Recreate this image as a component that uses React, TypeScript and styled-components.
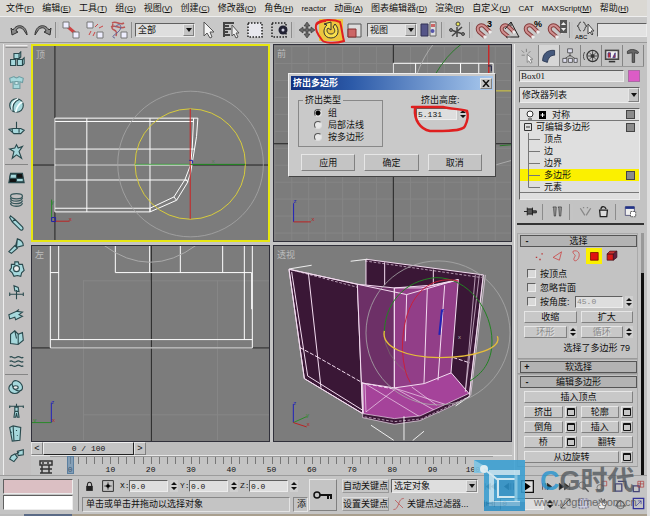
import React from "react";
import styled, { createGlobalStyle, css } from "styled-components";

const sans = `"Liberation Sans", "Noto Sans CJK SC", sans-serif`;
const mono = `"Liberation Mono", "Noto Sans CJK SC", monospace`;
const face = "#c4c4c4";
const raised = css`border: 1px solid; border-color: #e6e6e6 #808080 #808080 #e6e6e6;`;
const sunken = css`border: 1px solid; border-color: #606060 #ececec #ececec #606060;`;

const Global = createGlobalStyle`
  * { box-sizing: border-box; }
  body { margin: 0; background: ${face}; color: #111; font: 9px/12px ${sans}; }
  button, input, select { margin: 0; padding: 0; font: inherit; color: inherit; border-radius: 0; }
  svg { display: block; }
`;

const Page = styled.div`
  position: relative; display: flex; flex-direction: column; min-height: 100vh;
  overflow: hidden; background: ${face}; border-right: 3px solid #dedede;
`;
const MenuBar = styled.nav`
  display: flex; align-items: center; gap: 8px; height: 16px; padding-left: 6px; background: #dad8d3;
`;
const MenuItem = styled.button`
  border: 0; background: none; white-space: nowrap; line-height: 14px;
`;
const Latin = styled.span`font-size: 8px;`;

const Toolbar = styled.div`
  display: flex; align-items: center; height: 27px; padding-left: 7px;
  border-top: 1px solid #eee; border-bottom: 1px solid #9a9a9a; background: #c8c8c8;
`;
const ToolButton = styled.button<{ $active?: boolean }>`
  position: relative; display: flex; flex: 0 0 24px; justify-content: center; align-items: center; height: 22px;
  border: 0; background: ${(p) => (p.$active ? "#edc63e" : "none")};
`;
const Divider = styled.i`flex: 0 0 4px; height: 16px; border-left: 1px solid #8c8c8c; border-right: 2px solid ${face};`;
const SelectWrap = styled.label<{ $w?: number; $h?: number }>`
  position: relative; display: block; flex: ${(p) => (p.$w ? `0 0 ${p.$w}px` : "0 0 auto")};
  height: ${(p) => p.$h || 14}px; background: #dedede; ${sunken}
`;
const NativeSelect = styled.select`
  display: block; appearance: none; width: 100%; height: 100%; padding-left: 2px; border: 0; background: none;
`;
const Caret = styled.span`
  position: absolute; top: 0; right: 0; bottom: 0; width: 11px; display: flex; align-items: center;
  justify-content: center; background: ${face}; pointer-events: none; ${raised}
`;
const SetInput = styled.input`flex: 1; min-width: 20px; height: 14px; background: #e2e2e2; ${sunken}`;
const Mark = styled.svg<{ $x: number; $y: number }>`
  position: absolute; left: ${(p) => p.$x}px; top: ${(p) => p.$y}px; z-index: 3; overflow: visible; pointer-events: none;
`;

const Body = styled.main`display: flex; flex: 1; padding-top: 1px;`;
const SideBar = styled.aside`
  flex: 0 0 28px; margin-left: 3px; display: flex; flex-direction: column; padding: 4px 3px 0 1px;
  border-left: 1px solid #eee; background: #c2c0c0;
`;
const SideTop = styled.i`height: 3px; margin-top: -3px; border: 1px solid; border-color: #eee transparent #909090;`;
const SideButton = styled.button`height: 23px; display: flex; align-items: center; justify-content: center; border: 0; background: none;`;
const SideLine = styled.i`height: 1px; margin: 1px 0; background: #858585;`;

const Center = styled.section`flex: 1; min-width: 0; display: flex; flex-direction: column; position: relative;`;
const Views = styled.div`
  flex: 1; display: grid; grid-template: 1fr 1fr / 1fr 1fr; gap: 3px; min-height: 398px;
`;
const View = styled.div<{ $active?: boolean }>`
  position: relative; min-width: 0; min-height: 0; overflow: hidden; background: #7c7c7c;
  border: ${(p) => (p.$active ? "2px solid #e6e610" : "1px solid #30303a")};
`;
const Scene = styled.svg`position: absolute; inset: 0; width: 100%; height: 100%;`;
const ViewName = styled.span`position: relative; display: block; padding: 3px; color: #bcbcbc;`;

const TimeRow = styled.div`display: flex; height: 13px; background: #bdbdbd;`;
const TimeStep = styled.button`width: 12px; background: ${face}; line-height: 9px; ${raised}`;
const TimeThumb = styled.button`
  width: 91px; background: ${face}; font-family: ${mono}; font-size: 8px; line-height: 10px;
  border: 1px solid; border-color: #eee #222 #222 #eee;
`;
const TrackBar = styled.div`display: flex; height: 20px; border-top: 1px solid #e8e8e8;`;
const TrackIcon = styled.button`width: 19px; border: 0; padding: 2px 0 0 8px; background: none;`;
const Ruler = styled.div`position: relative; flex: 1; margin-right: 19px;`;
const Ticks = styled.div`
  height: 9px; display: grid; grid-template-columns: repeat(50, 1fr); padding: 0 20px; border-top: 1px solid #999;
  i { height: 7px; border-left: 1px solid #777; }
`;
const TickLabels = styled.div`
  display: grid; grid-template-columns: repeat(11, 1fr); font: 8px/10px ${mono}; text-align: center;
`;
const TimeMark = styled.i`position: absolute; left: 17px; top: 0; width: 7px; height: 18px; background: #5b87ad99; border: 1px solid #5b7f9f;`;

const Dialog = styled.form`
  position: absolute; left: 257px; top: 29px; z-index: 2; width: 208px; padding: 2px; background: #c9c9c9; border: 1px solid;
  border-color: #eee #444 #444 #eee;
`;
const TitleBar = styled.header`
  display: flex; align-items: center; justify-content: space-between; height: 14px; padding: 0 1px 0 2px; color: #fff;
  font-weight: bold; background: linear-gradient(90deg, #12307e, #2c5aa8 30%, #a9c9ee);
`;
const Close = styled.button`width: 12px; height: 11px; padding: 1px; background: ${face}; ${raised}`;
const DialogBody = styled.div`display: grid; grid-template-columns: 85px 1fr; gap: 33px; padding: 4px 26px 0 7px;`;
const Group = styled.fieldset`
  height: 53px; margin: 0; padding: 1px 0 0 15px; border: 1px solid #888; min-width: 0;
  legend { margin-left: -11px; padding: 0 2px; line-height: 12px; }
`;
const RadioRow = styled.label`
  display: flex; align-items: center; gap: 6px; height: 12px; white-space: nowrap;
  input { appearance: none; width: 8px; height: 8px; border-radius: 50%; background: #e8e8e8; border: 1px solid; border-color: #555 #ddd #ddd #555; }
  input:checked { background: radial-gradient(circle, #000 0 2px, #e8e8e8 3px); }
`;
const HeightField = styled.div`
  position: relative; padding-top: 0;
  label { display: block; padding-left: 5px; margin-bottom: 2px; }
`;
const DialogActions = styled.div`display: flex; gap: 9px; padding: 7px 11px 3px 10px;`;
const DialogButton = styled.button`flex: 1; height: 17px; background: ${face}; ${raised}`;

const NumRow = styled.div`display: flex; align-items: center; gap: 2px;`;
const NumInput = styled.input<{ $w: number }>`
  width: ${(p) => p.$w}px; height: 12px; padding: 0 1px; background: #dedede; font: 8px/10px ${mono}; ${sunken}
  &:disabled { color: #888; }
`;
const SpinBox = styled.button`width: 8px; height: 12px; display: flex; align-items: center; justify-content: center; border: 0; background: #cfcfcf;`;

const Panel = styled.aside`
  flex: 0 0 133px; min-width: 0; margin-left: 2px; padding: 1px 3px 0 2px; display: flex; flex-direction: column; border-left: 1px solid #eee;
  background: #c3c3c3;
`;
const Tabs = styled.div`display: flex; justify-content: center; height: 22px; border-bottom: 1px solid #999;`;
const Tab = styled.button<{ $active?: boolean }>`
  width: 21px; display: flex; align-items: center; justify-content: center; border: 0;
  border-right: 1px solid #858585; background: ${(p) => (p.$active ? "#d6d6d6" : "none")};
`;
const ObjectForm = styled.div`display: flex; flex-direction: column; gap: 5px; padding: 3px 4px 0 2px;`;
const NameRow = styled.div`
  display: flex; gap: 4px;
  input { flex: 1; width: 0; min-width: 0; height: 12px; background: #dedede; padding: 0 1px; font: 9px/10px "Liberation Serif", serif; ${sunken} }
`;
const Swatch = styled.button`width: 12px; height: 12px; border: 1px solid #aa6aa4; background: #dc5cc6;`;
const Stack = styled.ul`list-style: none; height: 92px; margin: 0; padding: 0; background: #dfdfdf; ${sunken}`;
const StackRow = styled.li<{ $level?: number; $on?: boolean; $line?: boolean }>`
  display: flex; align-items: center; gap: 4px; height: 12px; padding: 0 4px 0 ${(p) => (p.$level ? 8 : 4)}px;
  background: ${(p) => (p.$on ? "#fbf000" : "none")}; border-bottom: ${(p) => (p.$line ? "1px solid #777" : "0")};
  span { flex: 1; }
`;
const Square = styled.i`width: 9px; height: 9px; background: #8b8b8b; border: 1px solid #444;`;
const StackTools = styled.div`
  display: flex; align-items: center; justify-content: space-between; height: 25px; padding: 0 7px; border-bottom: 2px solid #333;
  button { border: 0; background: none; }
`;
const Rolls = styled.div`
  flex: 1; display: grid; grid-template-columns: minmax(0, 1fr) 3px; column-gap: 3px; padding-top: 8px;
`;
const ScrollLine = styled.i`background: linear-gradient(#999 0 40px, #111 40px);`;
const RollList = styled.div`display: flex; flex-direction: column;`;
const Roll = styled.section`padding: 1px 0 0 2px; border: 1px solid #aaa; border-bottom-color: #9a9a9a;`;
const RollHead = styled.button`
  display: grid; grid-template-columns: 12px 1fr 12px; width: 100%; height: 12px; line-height: 10px;
  background: #b3b3b3; border: 1px solid #555;
`;
const RollBody = styled.div`display: flex; flex-direction: column; gap: 3px; padding: 3px 4px;`;
const SubObjects = styled.div`display: flex; gap: 2px; padding-left: 8px; margin-top: -2px;`;
const SubButton = styled.button<{ $on?: boolean }>`
  width: 16px; height: 16px; display: flex; align-items: center; justify-content: center; border: 0;
  background: ${(p) => (p.$on ? "#fbf000" : "none")};
`;
const Checks = styled.div`display: flex; flex-direction: column; gap: 1px; padding-left: 3px;`;
const CheckRow = styled.label`
  display: flex; align-items: center; gap: 4px; height: 13px; white-space: nowrap;
  input { appearance: none; width: 9px; height: 9px; background: #d8d8d8; ${sunken} }
`;
const AngleRow = styled.div`display: flex; justify-content: space-between; align-items: center;`;
const TwoCol = styled.div`display: grid; grid-template-columns: 1fr 1fr; gap: 4px;`;
const Cell = styled.div`display: flex; gap: 2px;`;
const PushButton = styled.button`
  flex: 1; min-width: 0; height: 12px; line-height: 10px; background: #c8c8c8; ${raised}
  &:disabled { color: #8a8a8a; text-shadow: 1px 1px #e4e4e4; }
`;
const OptionButton = styled.button`width: 12px; height: 12px; padding: 1px; background: #c8c8c8; ${raised}`;
const Info = styled.p`margin: 1px 0; text-align: right; padding-right: 3px;`;

const Status = styled.footer`display: flex; gap: 5px; height: 39px; padding: 3px 0 3px 3px; border-top: 1px solid #9c9c9c; white-space: nowrap;`;
const Listener = styled.div`flex: 0 0 70px; display: grid; grid-template-rows: 15px 15px; gap: 1px;`;
const ListenerLine = styled.input<{ $pink?: boolean }>`width: 100%; background: ${(p) => (p.$pink ? "#dbbfc3" : "#fff")}; ${sunken}`;
const Coords = styled.div`flex: 0 0 230px; display: grid; grid-template-rows: 14px 15px; gap: 4px; padding-left: 3px; border-left: 1px solid #888;`;
const CoordRow = styled.div`display: flex; align-items: center; gap: 2px; label { width: 7px; font: 8px/10px ${mono}; text-align: right; }`;
const LockBox = styled.button`width: 14px; height: 14px; margin-right: 3px; display: flex; align-items: center; justify-content: center; border: 0; background: none;`;
const Prompt = styled.div`display: flex; gap: 3px;`;
const PromptText = styled.output<{ $fill?: boolean }>`flex: ${(p) => (p.$fill ? "1" : "0 0 15px")}; padding-left: 3px; border: 1px solid; border-color: #888 #e4e4e4 #e4e4e4 #888;`;
const KeyButton = styled.button`flex: 0 0 28px; margin-left: -4px; height: 32px; display: flex; align-items: center; justify-content: center; background: ${face}; ${raised}`;
const KeyGrid = styled.div`display: grid; grid-template: 14px 14px / 47px 87px; gap: 4px 2px;`;
const FlatButton = styled.button`border: 1px solid; border-color: #ddd #999 #999 #ddd; background: ${face}; text-align: center;`;
const FilterRow = styled.div`display: flex; align-items: center; button { border: 0; background: none; }`;
const PlayGrid = styled.div`flex: 1; display: flex; flex-direction: column; gap: 3px; padding-left: 1px;`;
const PlayRow = styled.div`display: flex; align-items: center; justify-content: space-between; height: 15px; padding-right: 2px;
  button { border: 0; background: none; }
`;
const BottomEdge = styled.div`height: 2px; background: linear-gradient(90deg, #bbb 24px, #5a6a86 24px 72px, #a99f8e 72px);`;

const Brand = styled.div`
  position: absolute; right: 0; bottom: 5px; z-index: 4; display: flex; align-items: center; gap: 11px; pointer-events: none;
`;
const BrandText = styled.div`width: 111px; margin-top: 5px; color: #555b60; opacity: 0.8; white-space: nowrap;`;
const BrandName = styled.div`padding-left: 4px; font: bold 27px/29px ${sans}; b { color: #2694cf; }`;
const BrandUrl = styled.div`margin-left: -2px; font: 11px/13px ${sans}; color: #555;`;

/* ---------- drawings ---------- */
const art: Record<string, React.ReactNode> = {
  undo: <path d="M2 8l1 7 6-3-2-1c1-4 6-5 9 1l2 3c0-9-9-13-14-5z" fill="#888" stroke="#333" />,
  redo: <path d="M18 8l-1 7-6-3 2-1c-1-4-6-5-9 1l-2 3c0-9 9-13 14-5z" fill="#888" stroke="#333" />,
  link: <g fill="#eef" stroke="#777"><path d="M7 7l7 6" stroke="#c44" strokeWidth="3" /><path d="M2 2h6v6H2zM12 12h6v6h-6z" /></g>,
  unlink: <g fill="#eef" stroke="#777"><path d="M2 2h6v6H2zM12 12h6v6h-6z" /><path d="M10 7l3-3M14 8l4-2M6 11l-2 4M10 12l-2 4" stroke="#c44" /></g>,
  bind: <g fill="none" stroke="#b55"><path d="M3 3c5-3 7 3 12 0M2 7c6-3 8 3 14 0M4 4c-4 9 6 3 3 12" strokeWidth="1.5" /><path d="M6 7c6-6 8 1 3 5s-7 5-3 6" stroke="#669" /><path d="M12 12h6v6h-6z" fill="#eef" stroke="#777" /></g>,
  pick: <path d="M7 2v14l3-3 3 5 2-1-2-5h4z" fill="#f4f4f4" stroke="#555" />,
  byName: <g><path d="M2 3h11M2 6h6M2 9h8M2 12h5M2 15h7M3 2v15" stroke="#444" strokeWidth="2" /><path d="M11 5v11l2-2 2 4 2-1-2-4h3z" fill="#eee" stroke="#555" /></g>,
  region: <path d="M3 3h14v14H3z" fill="#e8e8ee" stroke="#222" strokeWidth="1.5" strokeDasharray="1.5 1.5" />,
  window: <g><path d="M3 3h14v14H3z" fill="none" stroke="#222" strokeWidth="1.5" strokeDasharray="1.5 1.5" /><circle cx="14" cy="10" r="4.5" fill="#223" /><circle cx="14" cy="10" r="1.5" fill="#ccd" /></g>,
  move: <path d="M10 2l3 4h-2v3h3V7l4 3-4 3v-2h-3v3h2l-3 4-3-4h2v-3H6v2l-4-3 4-3v2h3V6H7z" fill="#666" stroke="#333" strokeWidth=".6" />,
  rotate: <path d="M6 5c-5 4-4 13 4 13 8 0 9-9 4-14l-2 3c3 3 2 7-2 7s-5-4-3-6l3 2V2L3 4z" fill="#f8e04d" stroke="#333" />,
  scale: <g><path d="M3 4h13v13H3z" fill="#ddd" stroke="#555" /><path d="M3 9h8v8H3z" fill="#c66" stroke="#833" /></g>,
  pivot: <g><path d="M2 4h7v12H2z" fill="#558" stroke="#335" /><path d="M11 2h6v14h-6z" fill="#ddd" stroke="#666" /><path d="M12 4h4v3h-4z" fill="#c66" /><circle cx="13.500" cy="11" r="2" fill="#55a" /></g>,
  manip: <g stroke="#444" fill="none"><path d="M10 7v10M4 10l12 4M5 16l10-9" strokeWidth="1.500" /><circle cx="11" cy="4" r="2" fill="#e6e155" /><circle cx="4" cy="10" r="1.500" fill="#777" /><circle cx="16" cy="14" r="1.500" fill="#777" /></g>,
  magnet: <g fill="none"><path d="M10 17L4 12C0 7 6 3 10 7l5 5" stroke="#843c3c" strokeWidth="4" /><path d="M10 17L4 12C0 7 6 3 10 7l5 5" stroke="#d09090" strokeWidth="2" /><path d="M9 16l2 2M14 11l2 2" stroke="#eee" strokeWidth="3" /></g>,
  braces: <g fill="none" stroke="#444"><path d="M6 2c-3 0-1 4-4 4 3 0 1 5 4 5M8 2c3 0 1 4 4 4-3 0-1 5-4 5" /><path d="M13 4v10l2-2 2 3 1-1-2-3h3z" fill="#eee" /></g>,
};
const side = [
  <path d="M7 3h6v6H7zM3 10h6v7H3zM11 10h6v7h-6zM13 3l2-2v6l-2 2M17 10l2-2v7l-2 2" />,
  <g stroke="#6f9da2"><path d="M2 5l5-2c2 2 4 2 6 0l5 2-1 5-3-1v8H6V9l-3 1z" /><path d="M8 9h4v3H8z" fill="#eff" /></g>,
  <g><circle cx="10" cy="10" r="8" /><path d="M5 16C4 9 7 4 12 2M9 18c1-6 4-10 8-12" fill="none" strokeWidth="2" stroke="#f4ffff" /><path d="M6 17C5 10 8 5 13 3" fill="none" /></g>,
  <path d="M10 2v8M1 11l5-1h9l4 2-4 4H7zM5 11v4M13 10v5" />,
  <path d="M10 2l2 4 5-2-4 6 3 8-6-4-5 4 2-8-5-3 6-1z" />,
  <g><path d="M3 5h14l2 11H1z" fill="#111" /><path d="M3 6h7v5H2zM10 11h8v4h-8z" /></g>,
  <g fill="none" stroke="#39585c" strokeWidth="1.5"><ellipse cx="10" cy="5" rx="7" ry="3" /><path d="M3 7c0 5 13 5 14 0M3 10c0 5 13 5 14 0M3 13c0 5 13 5 14 0" /></g>,
  <path d="M3 1l5 4 9 9c2 3-1 5-3 3L5 8 2 3zM5 8l3-3" />,
  <path d="M1 16l7-7 3 3-7 6zM9 9l2-8c4 1 7 4 7 8l-8 2zM11 1l-1 10" />,
  <g><path d="M8 1h4l1 3 4 0 1 4 1 3-3 3-1 4-4-1-4 1-2-4-3-3 2-3 0-4 4 0z" /><circle cx="10" cy="9" r="3.500" fill="#eee" /></g>,
  <path d="M2 12h16M10 7v11M7 2l5 2 1 5-5-1zM2 10v4M18 10v4" />,
  <path d="M1 9l9-4 7 1-4 3 4 2-8 4-1-3-6 2zM10 5l3-2" />,
  <path d="M3 5l5-4 4 4 5-2 1 9-6 5-9-1zM8 1l2 9M12 5l0 12" />,
  <path d="M2 5c3-3 4 3 8 0s5 3 8 0M2 10c3-3 4 3 8 0s5 3 8 0M2 15c3-3 4 3 8 0s5 3 8 0" fill="none" />,
  <g><ellipse cx="8" cy="11" rx="7" ry="6" /><ellipse cx="11" cy="8" rx="7" ry="5" transform="rotate(45 11 8)" /><ellipse cx="9" cy="10" rx="3" ry="2" fill="#eee" /></g>,
  <path d="M2 5h16M10 2v4M8 6h4v5H8zM8 11l-1 7h2l1-5 1 5h2l-1-7M2 4v3M18 4v3" />,
  <path d="M2 3l4-2 9 2-1 15-9 1zM6 1l1 17M10 6v1M11 12v1M4 8v1" />,
  <g><path d="M11 4l7-2v6l-6 1zM4 9l4-2 3 4-4 5-5-3zM8 8l5-3" /></g>,
];
const Icon = ({ children, s = 20, b = 20 }: { children: React.ReactNode; s?: number; b?: number }) => (
  <svg width={s} height={s} viewBox={`0 0 ${b} ${b}`} aria-hidden="true">{children}</svg>
);
const Spin = ({ label, off }: { label: string; off?: boolean }) => (
  <SpinBox type="button" aria-label={label} disabled={off}>
    <svg width="6" height="10" viewBox="0 0 6 10"><path d="M0 4l3-3 3 3zM0 6l3 3 3-3z" fill="#111" /></svg>
  </SpinBox>
);
const Drop = ({ label, value, w, h }: { label: string; value: string; w?: number; h?: number }) => (
  <SelectWrap $w={w} $h={h}>
    <NativeSelect aria-label={label}><option>{value}</option></NativeSelect>
    <Caret><svg width="6" height="4" viewBox="0 0 6 4"><path d="M0 0h6L3 4z" fill="#111" /></svg></Caret>
  </SelectWrap>
);
const Tool = ({ id, label, on, extra }: { id: string; label: string; on?: boolean; extra?: React.ReactNode }) => (
  <ToolButton aria-label={label} $active={on}><Icon>{art[id]}</Icon>{extra}</ToolButton>
);
const Grid = ({ x, y, w, h, step }: { x: number; y: number; w: number; h: number; step: number }) => (
  <g stroke="#868686">
    {Array.from({ length: Math.ceil(w / step) }, (_, i) => <path key={`v${i}`} d={`M${x + i * step + 0.5} ${y}v${h}`} />)}
    {Array.from({ length: Math.ceil(h / step) }, (_, i) => <path key={`h${i}`} d={`M${x} ${y + i * step + 0.5}h${w}`} />)}
  </g>
);
const Glyph = ({ x, y, c, children }: { x: number; y: number; c: string; children: string }) => (
  <text x={x} y={y} fill={c} fontSize="18" fontFamily="Liberation Sans, sans-serif">{children}</text>
);

const TopScene = () => (
  <Scene viewBox="33 46 235 194">
    <g transform="translate(0 40) scale(.33333)" fill="none" stroke="#fff" strokeWidth="3">
      <path d="M164 0v620M90 376h730" stroke="#222" />
      <path d="M164 235h430M164 245h417M260 235v282M450 235v282M164 328h418M164 376h410M164 421h398M164 506h286M164 517h286M164 235v282" />
      <path d="M594 235l-4 55-8 50-10 60-10 30-32 52-80 35M581 235l-4 90-5 51-17 44-33 52-72 34M522 472l8 10M555 420l10 6M450 506v11" />
      <circle cx="572" cy="373" r="219" stroke="#a6a6a6" strokeWidth="2.500" />
      <circle cx="571" cy="373" r="166" stroke="#d8cc3c" />
      <path d="M405 374h332" stroke="#1d8a1d" /><path d="M405 376h165" stroke="#d8f0d8" strokeWidth="2" /><path d="M571 207v331" stroke="#c22" />
      <path d="M568 362h10v10" stroke="#22a" />
      <path d="M154 545v-65" stroke="#2a8a2a" /><path d="M160 545h48" stroke="#b22" /><path d="M154 534h12v12h-12z" stroke="#22a" />
      <g stroke="none"><Glyph x={206} y={544} c="#b22">x</Glyph><Glyph x={152} y={492} c="#2a8a2a">y</Glyph><Glyph x={636} y={370} c="#567a56">x</Glyph></g>
    </g>
  </Scene>
);
const FrontScene = () => (
  <Scene viewBox="274 45 237 196">
    <Grid x={274} y={46} w={240} h={200} step={17} />
    <g transform="translate(270 40) scale(.33333)" fill="none" stroke="#fff" strokeWidth="3">
      <path d="M370 0v620M0 312h740" stroke="#222" />
      <path d="M370 120V70h300v50M437 70v50M572 70v50M627 70v50" />
      <path d="M440 105Q460 50 492 10M680 375l60-17" stroke="#aaa" /><path d="M495 105Q530 45 575 12M690 318l50-4" stroke="#2a7a2a" />
      <path d="M657 10v110" stroke="#c22" strokeWidth="4" /><path d="M655 78h10v16" stroke="#224" /><path d="M670 153h60" stroke="#d8cc3c" />
      <path d="M70 547v-56" stroke="#22b" /><path d="M70 547h52" stroke="#b22" />
      <g stroke="none"><Glyph x={70} y={490} c="#22b">z</Glyph><Glyph x={124} y={544} c="#b22">x</Glyph></g>
    </g>
  </Scene>
);
const LeftScene = () => (
  <Scene viewBox="32 246 237 195">
    <Grid x={83} y={280} w={186} h={160} step={67} />
    <g transform="translate(0 240) scale(.33333)" fill="none" stroke="#fff" strokeWidth="3">
      <path d="M454 0v620M90 323h730" stroke="#222" />
      <path d="M151 0v323h606V0M176 0v298M733 0v298M151 298h606M151 97h25M346 0v97h409v110M449 0v97M541 0v97M668 0v97" />
      <path d="M310 14Q450 118 590 14" stroke="#aaa" />
      <path d="M154 547v-60" stroke="#22b" /><path d="M154 547H96" stroke="#2a8a2a" />
      <g stroke="none"><Glyph x={154} y={492} c="#22b">z</Glyph><Glyph x={100} y={544} c="#2a8a2a">y</Glyph><Glyph x={156} y={546} c="#b22">x</Glyph></g>
    </g>
  </Scene>
);
const PerspectiveScene = () => (
  <Scene viewBox="274 246 237 195">
    <g transform="translate(270 240) scale(.33333)" fill="none" stroke="#f3dcf0" strokeWidth="3" strokeLinejoin="round">
      <path d="M288 57l352 47-42 362-310-120z" fill="#3a1736" />
      <path d="M278 425l95 18 170-46 55 64-64 30-84 42-77 8-93-20z" fill="#a5439a" />
      <path d="M57 87l205 45 16 388-175-105z" fill="#3a1736" />
      <path d="M262 132l111 11v300l-98-15z" fill="#6d3067" stroke="none" />
      <path d="M373 143l112-8 80-17-22 280-80 32-90 13z" fill="#923e88" />
      <path d="M262 132l111 11h80l112-23M262 132l148 31 155-45M373 143v300l-98-15M410 163l-4 140M472 145l-10 285M524 135l-20 285" />
      <path d="M115 97l38 345M57 87l46 328 175 105-16-388zM65 95l48 312 165 103M344 66v68M490 88v44" />
      <path d="M90 322l52 28M142 350l136 78M275 428l95 18M550 352l50 16" strokeDasharray="12 5" />
      <path d="M285 430l3 85 90-70 150 48M373 443l135 75M425 440l75 55M285 430l165 100" strokeWidth="2" />
      <path d="M278 520l95 15 77-8 84-38 64-30v10l-64 34-84 38-77 11-95-20z" fill="#3a1736" strokeWidth="2" />
      <path d="M640 104l-42 358M628 104l-42 350M616 104l-30 350M646 104l-44 362" strokeWidth="2" />
      <path d="M285 62l350 50M57 87l205 54M284 530l90 14 80-8 146-68" strokeDasharray="8 5" strokeWidth="2" />
      <path d="M58 86l67-11M242 63l50-6M303 555l68 45M402 528v72M428 601l34-28M557 497l40-28" stroke="#eee" />
      <circle cx="504" cy="278" r="216" stroke="#aaa" strokeOpacity=".8" />
      <path d="M343 280c0-90 60-160 155-168 100 0 167 100 168 190 0 65-30 98-66 120" stroke="#228222" />
      <path d="M343 280q0 65 70 120" stroke="#7a8a6a" strokeOpacity=".5" />
      <path d="M565 122c-90-20-168 50-168 205q4 70 24 100" stroke="#c8203c" />
      <path d="M343 272c-10 50 70 80 165 80 110 0 190-30 174-64" stroke="#e6bd3a" strokeWidth="4" />
      <path d="M516 208l-8 76" stroke="#2222b4" strokeWidth="6" />
      <path d="M70 547v-56" stroke="#22b" /><path d="M70 547l40-18" stroke="#2a8a2a" /><path d="M70 547l40 13" stroke="#b22" />
      <g stroke="none"><Glyph x={514} y={214} c="#22b">z</Glyph><Glyph x={564} y={296} c="#aaa">x</Glyph><Glyph x={70} y={494} c="#22b">z</Glyph><Glyph x={108} y={530} c="#2a8a2a">y</Glyph><Glyph x={110} y={558} c="#b22">x</Glyph></g>
    </g>
  </Scene>
);

const menus: [string, string?][] = [["文件", "F"], ["编辑", "E"], ["工具", "T"], ["组", "G"], ["视图", "V"], ["创建", "C"], ["修改器", "O"], ["角色", "H"], ["reactor"], ["动画", "A"], ["图表编辑器", "D"], ["渲染", "R"], ["自定义", "U"], ["CAT"], ["MAXScript", "M"], ["帮助", "H"]];
const isLatin = (s: string) => /^[A-Za-z]/.test(s);
const Option = ({ name }: { name: string }) => (
  <OptionButton type="button" aria-label={`${name} 设置`}><svg width="8" height="8" viewBox="0 0 8 8"><path d="M.5 .5h7v7h-7z" fill="none" stroke="#111" /><path d="M0 1.500h8" stroke="#111" /></svg></OptionButton>
);
const tabArt = [
  <path d="M9 8v10l2-2 2 3 2-1-2-4h3zM2 3l3 3M8 1v4M2 9h4M13 4l-3 3" fill="#f4f4f4" stroke="#777" />,
  <path d="M2 16C2 7 8 2 17 3v6c-5 0-8 3-9 9z" fill="#45597c" stroke="#222f49" />,
  <g fill="#dde" stroke="#444"><path d="M10 6v5M4 13l6-4 6 4" fill="none" /><path d="M7 1h6v5H7zM1 13h5v5H1zM8 13h5v5H8zM15 13h4v5h-4z" /></g>,
  <g fill="none" stroke="#333"><circle cx="12" cy="10" r="7" strokeWidth="1.500" /><circle cx="12" cy="10" r="2" fill="#333" /><path d="M12 4v12M6 10h12M8 6l8 8M16 6l-8 8M2 5c-2 4-2 7 0 10" /></g>,
  <g><path d="M1 2h18v13H1z" fill="#444" /><path d="M3 4h14v9H3z" fill="#eee" /><path d="M5 12V6h3v6M11 12l3-6v6z" fill="#c33" stroke="#338" /><path d="M6 17h8" stroke="#333" strokeWidth="2" /></g>,
  <path d="M3 4c4-3 9-3 14 1l-1 2-4-1v12H9V6L3 7z" fill="#666" stroke="#333" />,
];
const subArt = [
  <path d="M4 11h2v2H4zM9 14h2v2H9zM12 6h2v2h-2z" fill="#b33" />,
  <path d="M3 12l12-8-3 12z" fill="none" stroke="#c33" />,
  <path d="M6 3c7-2 10 3 8 9s-8 6-7 2 3-4 1-6-3-3-2-5z" fill="none" stroke="#c33" />,
  <path d="M5 5h11v11H5z" fill="#e01010" stroke="#600" />,
  <g stroke="#401018"><path d="M3 7h9v9H3z" fill="#d81818" /><path d="M3 7l4-4h10l-5 4z" fill="#c33" /><path d="M12 7l5-4v9l-5 4z" fill="#602040" /></g>,
];
const playArt = [
  <path d="M2 5v10M10 5l-7 5 7 5zM18 5l-7 5 7 5z" fill="#222" stroke="#222" />,
  <path d="M9 5l-7 5 7 5zM12 5v10M16 5v10" fill="#222" stroke="#222" />,
  <g><path d="M1 1h18v18H1z" fill="#ddd" stroke="#111" strokeWidth="2" /><path d="M6 4l9 6-9 6z" /></g>,
  <path d="M11 5l7 5-7 5zM4 5v10M8 5v10" fill="#222" stroke="#222" />,
  <path d="M18 5v10M10 5l7 5-7 5zM2 5l7 5-7 5z" fill="#222" stroke="#222" />,
];
const navArt = [
  <g fill="none" stroke="#555"><circle cx="8" cy="8" r="5" /><path d="M12 12l6 6" strokeWidth="2" /></g>,
  <g fill="none" stroke="#555"><circle cx="8" cy="12" r="5" /><path d="M11 2h7v7h-7z" stroke="#a33" /></g>,
  <g fill="none" stroke="#447"><path d="M2 6h10v11H2zM6 2h12v11" strokeWidth="2" /></g>,
  <g fill="none" stroke="#447"><path d="M2 9h9v9H2z" strokeWidth="2" /><path d="M9 2h9v9H9zM9 6h9M13 2v9" stroke="#a33" /></g>,
  <g fill="none" stroke="#333"><path d="M3 17L17 3M10 3l7 0v7M3 10v7h7" /></g>,
  <path d="M3 3h14v14H3z" fill="#ccd" stroke="#447" strokeDasharray="3 2" />,
  <path d="M5 18l-3-8 3 1V4l3 5V2l3 7 2-6v7l4-3-4 11z" fill="#eee" stroke="#444" />,
  <g fill="none" stroke="#444"><path d="M2 14h16L10 5z" /><circle cx="10" cy="12" r="6" /></g>,
  <g fill="none" stroke="#339"><path d="M2 2h16v16H2z" strokeWidth="2" /><path d="M6 14l8-8M9 6h5v5" /></g>,
];

export default function App() {
  const rows = ["顶点", "边", "边界", "多边形", "元素"];
  return (
    <Page>
      <Global />
      <MenuBar>
        {menus.map(([n, k], i) => (
          <MenuItem key={i}>{isLatin(n) ? <Latin>{n}</Latin> : n}{k && <Latin>(<u>{k}</u>)</Latin>}</MenuItem>
        ))}
      </MenuBar>
      <Toolbar>
        <Tool id="undo" label="撤消" /><Tool id="redo" label="重做" /><Divider />
        <Tool id="link" label="链接" /><Tool id="unlink" label="断开链接" /><Tool id="bind" label="绑定" /><Divider />
        <Drop label="选择过滤器" value="全部" w={60} />
        <Tool id="pick" label="选择对象" /><Tool id="byName" label="按名称选择" /><Tool id="region" label="选择区域" /><Tool id="window" label="窗口/交叉" /><Divider />
        <Tool id="move" label="移动" />
        <Tool id="rotate" label="旋转" on extra={
          <Mark $x={-4} $y={-1} width="32" height="28" viewBox="0 0 32 28"><path d="M1 6C6 1 19 1 25 4c2 6 2 12 4 19-9 3-21 2-22-1C3 17 0 11 1 7c3-3 6-4 10-4" fill="none" stroke="#e02020" strokeWidth="2" /></Mark>} />
        <Tool id="scale" label="缩放" />
        <Drop label="参考坐标系" value="视图" w={50} />
        <Tool id="pivot" label="轴点中心" /><Divider /><Tool id="manip" label="操纵" /><Divider />
        <Tool id="magnet" label="捕捉" extra={<Mark $x={13} $y={0} width="10" height="10" viewBox="0 0 10 10"><text x="1" y="8" fontSize="9" fontWeight="bold" fontFamily="Liberation Sans, sans-serif">3</text></Mark>} />
        <Tool id="magnet" label="角度捕捉" extra={<Mark $x={7} $y={2} width="16" height="18" viewBox="0 0 16 18"><path d="M1 8L7 1l8 15H2M7 1v4" fill="none" stroke="#222" strokeWidth="1" /></Mark>} />
        <Tool id="magnet" label="百分比捕捉" extra={<Mark $x={12} $y={0} width="12" height="10" viewBox="0 0 12 10"><text x="1" y="8" fontSize="9" fontWeight="bold" fontFamily="Liberation Sans, sans-serif">%</text></Mark>} />
        <Tool id="magnet" label="微调器捕捉" extra={<Mark $x={15} $y={1} width="7" height="13" viewBox="0 0 7 13"><path d="M0 0h7v13H0z" fill="#555" /><path d="M1 5l2.500-3L6 5zM1 8l2.500 3L6 8z" fill="#eee" /></Mark>} />
        <Divider />
        <Tool id="braces" label="命名选择集" extra={<Mark $x={1} $y={14} width="14" height="7" viewBox="0 0 14 7"><text x="1" y="6" fontSize="6" fontFamily="Liberation Sans, sans-serif">ABC</text></Mark>} />
        <SetInput aria-label="命名选择" />
      </Toolbar>

      <Body>
        <SideBar>
          <SideTop />
          {side.map((d, i) => (
            <React.Fragment key={i}>
              {(i === 5 || i === 14) && <SideLine />}
              <SideButton aria-label={`reactor ${i + 1}`}><Icon s={17}><g fill="#a6d8dc" stroke="#29494d" strokeWidth="1.300">{d}</g></Icon></SideButton>
            </React.Fragment>
          ))}
        </SideBar>

        <Center>
          <Views>
            <View $active><TopScene /><ViewName>顶</ViewName></View>
            <View><FrontScene /><ViewName>前</ViewName></View>
            <View><LeftScene /><ViewName>左</ViewName></View>
            <View><PerspectiveScene /><ViewName>透视</ViewName></View>
          </Views>
          <TimeRow><TimeStep aria-label="上一帧">&lt;</TimeStep><TimeThumb>0 / 100</TimeThumb><TimeStep aria-label="下一帧">&gt;</TimeStep></TimeRow>
          <TrackBar>
            <TrackIcon aria-label="打开迷你曲线编辑器"><svg width="14" height="14" viewBox="0 0 14 14"><path d="M1 1h12v4H1zM1 13h12M1 9h12M3 5v8M10 5v8M3 3h2M8 3h2" fill="none" stroke="#333" strokeWidth="1.500" /></svg></TrackIcon>
            <Ruler>
              <Ticks>{Array.from({ length: 50 }, (_, i) => <i key={i} />)}</Ticks>
              <TickLabels>{Array.from({ length: 11 }, (_, i) => <span key={i}>{i * 10}</span>)}</TickLabels>
              <TimeMark />
            </Ruler>
          </TrackBar>

          <Dialog onSubmit={(e) => e.preventDefault()}>
            <TitleBar>挤出多边形<Close type="button" aria-label="关闭"><svg width="8" height="7" viewBox="0 0 8 7"><path d="M1 0l6 7M7 0L1 7" stroke="#111" strokeWidth="1.500" /></svg></Close></TitleBar>
            <DialogBody>
              <Group>
                <legend>挤出类型</legend>
                {["组", "局部法线", "按多边形"].map((t, i) => <RadioRow key={t}><input type="radio" name="type" defaultChecked={i === 0} />{t}</RadioRow>)}
              </Group>
              <HeightField>
                <label htmlFor="height">挤出高度:</label>
                <NumRow><NumInput id="height" $w={41} defaultValue="5.131" /><Spin label="高度微调" /></NumRow>
                <Mark $x={-4} $y={12} width="60" height="30" viewBox="0 0 60 30"><path d="M0 1h31c9 2 18 2 24 4 2 6 0 11-2 15-2 6-27 5-35 5C8 23 2 14 3 2" fill="none" stroke="#df1f1f" strokeWidth="2.500" strokeLinecap="round" /></Mark>
              </HeightField>
            </DialogBody>
            <DialogActions>{["应用", "确定", "取消"].map((t) => <DialogButton key={t} type="button">{t}</DialogButton>)}</DialogActions>
          </Dialog>
        </Center>

        <Panel>
          <Tabs>{["创建", "修改", "层次", "运动", "显示", "工具"].map((t, i) => <Tab key={t} aria-label={t} $active={i === 1}><Icon s={16}>{tabArt[i]}</Icon></Tab>)}</Tabs>
          <ObjectForm>
            <NameRow><input aria-label="对象名称" defaultValue="Box01" /><Swatch aria-label="对象颜色" /></NameRow>
            <Drop label="修改器" value="修改器列表" h={16} />
            <Stack>
              <StackRow $line>
                <svg width="24" height="10" viewBox="0 0 24 10"><circle cx="6" cy="4" r="3" fill="#fff" stroke="#333" /><path d="M4 9h4" stroke="#333" /><path d="M15 1h7v8h-7z" /><path d="M16.500 5h4M18.500 3v4" stroke="#fff" /></svg>
                <span>对称</span><Square />
              </StackRow>
              <StackRow>
                <svg width="8" height="10" viewBox="0 0 8 10"><path d="M.5 1.500h7v7h-7zM2 5h4" fill="none" stroke="#333" /></svg>
                <span>可编辑多边形</span><Square />
              </StackRow>
              {rows.map((t, i) => (
                <StackRow key={t} $level={1} $on={i === 3} $line={i === 4}>
                  <svg width="12" height="12" viewBox="0 0 12 12"><path d={i === 4 ? "M.5 0v6.500H12" : "M.5 0v12M0 6.500h12"} fill="none" stroke="#777" /></svg>
                  <span>{t}</span>{i === 3 && <Square />}
                </StackRow>
              ))}
            </Stack>
          </ObjectForm>
          <StackTools>
            <button aria-label="锁定堆栈"><Icon s={13}><path d="M0 10h5M5 4v12M5 6h8v8H5M13 4v12M13 9h6v3h-6" fill="#555" stroke="#222" strokeWidth="1.500" /></Icon></button><Divider />
            <button aria-label="显示最终结果"><Icon s={13}><path d="M3 3h5v2L7 17H5L4 5zM11 3h5v2l-1 12h-2L12 5z" fill="#999" stroke="#333" /></Icon></button><Divider />
            <button aria-label="使唯一"><Icon s={13}><path d="M2 5l7 11M18 5l-7 11M6 4h2M12 4h2" stroke="#888" strokeWidth="2" /></Icon></button>
            <button aria-label="移除修改器"><Icon s={13}><path d="M4 8h12l-1 10H5z" fill="#ddd" stroke="#222" strokeWidth="2" /><path d="M6 7c0-6 6-6 8-1" fill="none" stroke="#222" strokeWidth="2" /></Icon></button><Divider />
            <button aria-label="配置修改器集"><Icon s={13}><path d="M2 3h14v13H2z" fill="#eee" stroke="#225" /><path d="M2 4h14" stroke="#238" strokeWidth="4" /><path d="M10 10h8v8h-8z" fill="#fff" stroke="#222" strokeDasharray="3 1" /></Icon></button>
          </StackTools>
          <Rolls>
            <RollList>
              <Roll>
                <RollHead><b>-</b><span>选择</span></RollHead>
                <RollBody>
                  <SubObjects>{rows.map((t, i) => <SubButton key={t} aria-label={t} $on={i === 3}><Icon s={14}>{subArt[i]}</Icon></SubButton>)}</SubObjects>
                  <Checks>
                    <CheckRow><input type="checkbox" />按顶点</CheckRow>
                    <CheckRow><input type="checkbox" />忽略背面</CheckRow>
                    <AngleRow><CheckRow><input type="checkbox" />按角度:</CheckRow><NumRow><NumInput $w={48} disabled defaultValue="45.0" aria-label="角度" /><Spin label="角度微调" /></NumRow></AngleRow>
                  </Checks>
                  <TwoCol><PushButton>收缩</PushButton><PushButton>扩大</PushButton></TwoCol>
                  <TwoCol><Cell><PushButton disabled>环形</PushButton><Spin label="环形微调" /></Cell><Cell><PushButton disabled>循环</PushButton><Spin label="循环微调" /></Cell></TwoCol>
                  <Info>选择了多边形 79</Info>
                </RollBody>
              </Roll>
              <Roll><RollHead><b>+</b><span>软选择</span></RollHead></Roll>
              <Roll>
                <RollHead><b>-</b><span>编辑多边形</span></RollHead>
                <RollBody>
                  <PushButton>插入顶点</PushButton>
                  <TwoCol><Cell><PushButton>挤出</PushButton><Option name="挤出" /></Cell><Cell><PushButton>轮廓</PushButton><Option name="轮廓" /></Cell></TwoCol>
                  <TwoCol><Cell><PushButton>倒角</PushButton><Option name="倒角" /></Cell><Cell><PushButton>插入</PushButton><Option name="插入" /></Cell></TwoCol>
                  <TwoCol><Cell><PushButton>桥</PushButton><Option name="桥" /></Cell><PushButton>翻转</PushButton></TwoCol>
                  <Cell><PushButton>从边旋转</PushButton><Option name="从边旋转" /></Cell>
                </RollBody>
              </Roll>
            </RollList>
            <ScrollLine />
          </Rolls>
        </Panel>
      </Body>

      <Status>
        <Listener><ListenerLine $pink aria-label="宏记录器" /><ListenerLine aria-label="脚本侦听器" /></Listener>
        <Coords>
          <CoordRow>
            <LockBox aria-label="锁定选择"><Icon s={11}><path d="M4 9h12v9H4z" fill="#222" /><path d="M6 9c0-9 8-9 8 0" fill="none" stroke="#222" strokeWidth="2" /></Icon></LockBox>
            <LockBox aria-label="绝对模式"><Icon s={12}><path d="M1 1h18v18H1zM10 4v12M4 10h12" fill="none" stroke="#222" strokeWidth="1.500" /><circle cx="10" cy="10" r="3" /></Icon></LockBox>
            {["X", "Y", "Z"].map((a) => <React.Fragment key={a}><label htmlFor={a}>{a}:</label><NumInput id={a} $w={39} defaultValue="0.0" /><Spin label={`${a} 微调`} /></React.Fragment>)}
          </CoordRow>
          <Prompt><PromptText $fill>单击或单击并拖动以选择对象</PromptText><PromptText>添</PromptText></Prompt>
        </Coords>
        <KeyButton aria-label="设置关键点"><svg width="20" height="10" viewBox="0 0 20 10"><circle cx="4" cy="5" r="3" fill="none" stroke="#111" strokeWidth="1.500" /><path d="M7 5h12M15 5v4M18 5v4" stroke="#111" strokeWidth="2" /></svg></KeyButton>
        <KeyGrid>
          <FlatButton>自动关键点</FlatButton><Drop label="选择集" value="选定对象" />
          <FlatButton>设置关键点</FlatButton>
          <FilterRow><button aria-label="切线"><Icon s={16}><path d="M3 17C11 17 8 3 16 3M5 5l10 10" fill="none" stroke="#b55" /></Icon></button><button>关键点过滤器...</button></FilterRow>
        </KeyGrid>
        <PlayGrid>
          <PlayRow>{playArt.map((d, i) => <button key={i} aria-label={`播放 ${i + 1}`}><Icon s={13}>{d}</Icon></button>)}{navArt.slice(0, 4).map((d, i) => <button key={i} aria-label={`导航 ${i + 1}`}><Icon s={13}>{d}</Icon></button>)}</PlayRow>
          <PlayRow><button aria-label="关键点模式"><Icon s={11}><path d="M1 4v12M19 4v12M5 10h10M5 6v8M15 6v8" stroke="#222" strokeWidth="2" /></Icon></button><NumRow><NumInput $w={44} defaultValue="0" aria-label="当前帧" /><Spin label="帧微调" /></NumRow>{navArt.slice(4).map((d, i) => <button key={i} aria-label={`视图 ${i + 1}`}><Icon s={13}>{d}</Icon></button>)}</PlayRow>
        </PlayGrid>
      </Status>
      <BottomEdge />

      <Brand>
        <svg width="51" height="51" viewBox="0 0 51 51" opacity=".88">
          <path d="M0 0h51v51H10V13H0z" fill="#3a9fd2" />
          <path d="M0 0l9 5v8H0z" fill="#7cc5e6" />
          <path d="M15 10h31v5H20v26h26v5H15z" fill="#b9dff0" /><path d="M10 42h41v9H10z" fill="#1f7fb6" opacity=".5" />
          <path d="M24 19h18v18H24z" fill="#2b8fc6" stroke="#d4edf7" strokeWidth="2" /><path d="M42 15v26" stroke="#7cc5e6" strokeWidth="3" />
          <circle cx="10" cy="9" r="4" fill="#e3f2f8" /><path d="M10 9l14 11" stroke="#d4edf7" strokeWidth="2" />
        </svg>
        <BrandText><BrandName><b>C</b>G时代</BrandName><BrandUrl>www.vcgtime.com.cn</BrandUrl></BrandText>
      </Brand>
    </Page>
  );
}
